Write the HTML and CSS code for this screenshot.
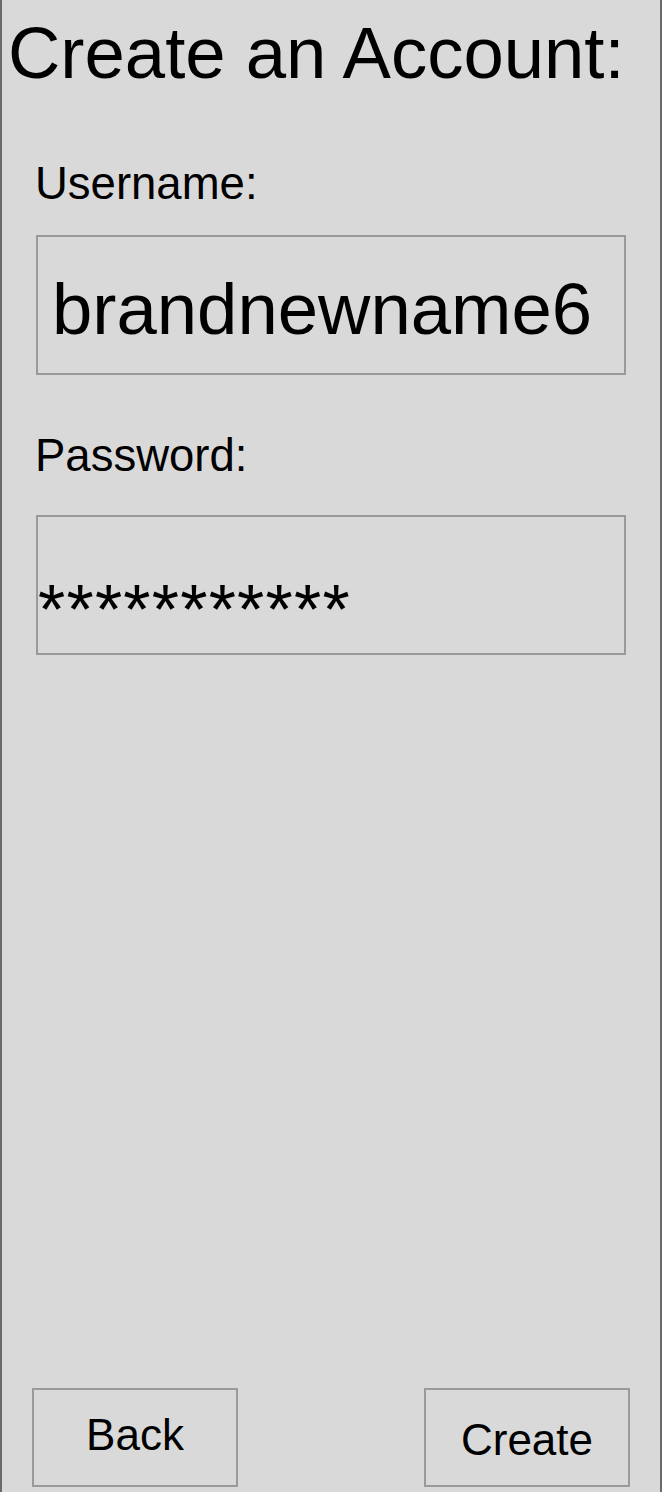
FILE: index.html
```html
<!DOCTYPE html>
<html>
<head>
<meta charset="utf-8">
<link rel="stylesheet" href="styles.css">
</head>
<body>
<div class="screen">
  <h1 class="title">Create an Account:</h1>
  <div class="form">
    <div class="label label-user">Username:</div>
    <div class="field field-user">brandnewname6</div>
    <div class="label label-pass">Password:</div>
    <div class="field field-pass">***********</div>
  </div>
  <div class="actions">
    <div class="btn btn-back">Back</div>
    <div class="btn btn-create">Create</div>
  </div>
</div>
</body>
</html>
```

FILE: styles.css
```css
html, body {
  margin: 0;
  padding: 0;
  background: #d9d9d9;
}
* { box-sizing: border-box; }
.screen {
  width: 662px;
  height: 1492px;
  background: #d9d9d9;
  border-left: 2px solid #6a6a6a;
  border-right: 2px solid #6a6a6a;
  display: flex;
  flex-direction: column;
  font-family: "Liberation Sans", Arial, sans-serif;
  color: #000;
}
.title {
  margin: 0;
  padding: 17px 0 0 6px;
  font-size: 72.5px;
  font-weight: normal;
  line-height: 1;
  white-space: nowrap;
}
.form {
  display: flex;
  flex-direction: column;
  padding: 0 34px;
  flex: 1;
}
.label {
  font-size: 45.5px;
  line-height: 1;
  margin-left: -1px;
}
.label-user { margin-top: 71px; }
.label-pass { margin-top: 58px; }
.field {
  border: 2px solid #9a9a9a;
  height: 140px;
  width: 590px;
  font-size: 72px;
  line-height: 1;
  white-space: nowrap;
}
.field-user {
  margin-top: 29px;
  padding: 36px 0 0 14px;
  font-size: 72.5px;
}
.field-pass {
  margin-top: 36px;
  padding: 58px 0 0 0;
  font-size: 70px;
  letter-spacing: 1.2px;
}
.actions {
  display: flex;
  justify-content: space-between;
  padding: 0 30px 5px 30px;
}
.btn {
  width: 206px;
  height: 99px;
  border: 2px solid #9a9a9a;
  font-size: 44px;
  line-height: 1;
  text-align: center;
}
.btn-back { padding-top: 23px; }
.btn-create { padding-top: 28px; }
```
